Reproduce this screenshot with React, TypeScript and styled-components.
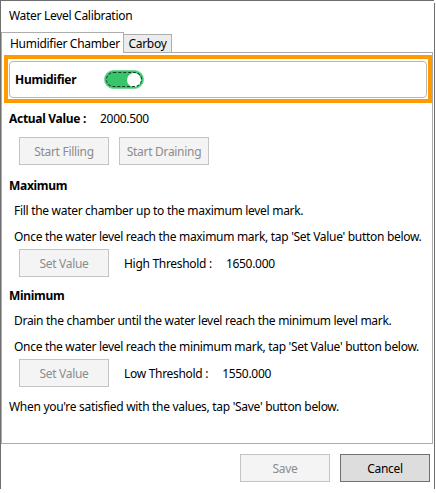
import React from "react";
import styled, { createGlobalStyle } from "styled-components";

const GlobalStyle = createGlobalStyle`
  html, body { margin: 0; padding: 0; background: #ffffff; }
  body {
    font-family: "Noto Sans", "Open Sans", sans-serif;
    font-size: 12px;
    letter-spacing: -0.3px;
    color: #000000;
  }
  * { box-sizing: border-box; }
`;

const Window = styled.div`
  width: 434px;
  height: 489px;
  border-top: 1px solid #6e6e6e;
  border-left: 1px solid #6e6e6e;
  box-shadow: 2px 2px 0 -1px #6e6e6e;
  background: #ffffff;
  display: flex;
  flex-direction: column;
`;

const TitleBar = styled.div`
  height: 31px;
  padding: 0 0 2px 8px;
  display: flex;
  align-items: center;
  flex: none;
`;

const TabStrip = styled.div`
  height: 20px;
  display: flex;
  align-items: flex-end;
  flex: none;
`;

const Tab = styled.div<{ $active?: boolean; $width: number }>`
  width: ${(p) => p.$width}px;
  height: ${(p) => (p.$active ? 21 : 18)}px;
  margin-bottom: ${(p) => (p.$active ? -1 : 0)}px;
  margin-left: ${(p) => (p.$active ? 0 : -1)}px;
  position: relative;
  z-index: ${(p) => (p.$active ? 1 : 0)};
  background: ${(p) => (p.$active ? "#ffffff" : "#ececec")};
  border: 1px solid #acacac;
  border-bottom: none;
  display: flex;
  align-items: center;
  justify-content: ${(p) => (p.$active ? "flex-start" : "center")};
  padding-left: ${(p) => (p.$active ? 8 : 0)}px;
  white-space: nowrap;
`;

const Panel = styled.div`
  width: 432px;
  height: 392px;
  border: 1px solid #acacac;
  padding: 2px 0 0 2px;
  display: flex;
  flex-direction: column;
  flex: none;
`;

const FocusFrame = styled.div`
  width: 428px;
  border: 4px solid #ff9a00;
  padding: 2px 1px 1px 1px;
`;

const ToggleCard = styled.div`
  height: 37px;
  border: 1px solid #b9b9b9;
  border-radius: 4px;
  padding-left: 5px;
  display: flex;
  align-items: center;
`;

const Label = styled.span<{ $width?: number }>`
  font-weight: 700;
  display: inline-block;
  width: ${(p) => (p.$width ? `${p.$width}px` : "auto")};
  flex: none;
`;

const Toggle = styled.div`
  width: 40px;
  height: 19px;
  border-radius: 10px;
  background: #37c46b;
  border: 1px solid #74d898;
  position: relative;
  display: flex;
  align-items: center;
  justify-content: flex-end;
  padding-right: 2px;
  &::before {
    content: "";
    position: absolute;
    inset: 1px;
    border: 1px dashed #1d3a26;
    border-radius: 8px;
  }
`;

const Knob = styled.div`
  width: 14px;
  height: 14px;
  border-radius: 50%;
  background: #ffffff;
`;

const Content = styled.div`
  padding-left: 5px;
  display: flex;
  flex-direction: column;
`;

const Line = styled.div<{ $top: number; $indent?: number; $bold?: boolean }>`
  height: 20px;
  margin-top: ${(p) => p.$top}px;
  padding-left: ${(p) => p.$indent ?? 0}px;
  font-weight: ${(p) => (p.$bold ? 700 : 400)};
  display: flex;
  align-items: center;
  white-space: nowrap;
`;

const ButtonRow = styled.div<{ $top: number }>`
  margin-top: ${(p) => p.$top}px;
  padding-left: 10px;
  display: flex;
  align-items: center;
  gap: 10px;
`;

const Button = styled.button<{ $variant?: "disabled" | "default" }>`
  width: 90px;
  height: 28px;
  margin: 0;
  padding: 0;
  font-family: inherit;
  font-size: 12px;
  letter-spacing: inherit;
  border: 1px solid ${(p) => (p.$variant === "default" ? "#707070" : "#c4c4c4")};
  background: ${(p) => (p.$variant === "default" ? "#dddddd" : "#f4f4f4")};
  color: ${(p) => (p.$variant === "default" ? "#000000" : "#8c8c8c")};
  flex: none;
`;

const Threshold = styled.span<{ $gap: number }>`
  margin-left: ${(p) => p.$gap}px;
  white-space: nowrap;
`;

const Footer = styled.div`
  display: flex;
  justify-content: flex-end;
  gap: 10px;
  padding: 10px 4px 0 0;
`;

export default function App() {
  return (
    <>
      <GlobalStyle />
      <Window>
        <TitleBar>Water Level Calibration</TitleBar>
        <TabStrip>
          <Tab $active $width={123}>Humidifier Chamber</Tab>
          <Tab $width={49}>Carboy</Tab>
        </TabStrip>
        <Panel>
          <FocusFrame>
            <ToggleCard>
              <Label $width={89}>Humidifier</Label>
              <Toggle>
                <Knob />
              </Toggle>
            </ToggleCard>
          </FocusFrame>
          <Content>
            <Line $top={5}>
              <Label $width={91}>Actual Value :</Label>
              <span>2000.500</span>
            </Line>
            <ButtonRow $top={9}>
              <Button disabled>Start Filling</Button>
              <Button disabled>Start Draining</Button>
            </ButtonRow>
            <Line $top={10} $bold>Maximum</Line>
            <Line $top={5} $indent={5}>Fill the water chamber up to the maximum level mark.</Line>
            <Line $top={6} $indent={5}>Once the water level reach the maximum mark, tap 'Set Value' button below.</Line>
            <ButtonRow $top={3}>
              <Button disabled>Set Value</Button>
              <Threshold $gap={5}>High Threshold :</Threshold>
              <Threshold $gap={4}>1650.000</Threshold>
            </ButtonRow>
            <Line $top={8} $bold>Minimum</Line>
            <Line $top={5} $indent={5}>Drain the chamber until the water level reach the minimum level mark.</Line>
            <Line $top={6} $indent={5}>Once the water level reach the minimum mark, tap 'Set Value' button below.</Line>
            <ButtonRow $top={3}>
              <Button disabled>Set Value</Button>
              <Threshold $gap={5}>Low Threshold :</Threshold>
              <Threshold $gap={4}>1550.000</Threshold>
            </ButtonRow>
            <Line $top={9}>When you're satisfied with the values, tap 'Save' button below.</Line>
          </Content>
        </Panel>
        <Footer>
          <Button disabled>Save</Button>
          <Button $variant="default">Cancel</Button>
        </Footer>
      </Window>
    </>
  );
}
